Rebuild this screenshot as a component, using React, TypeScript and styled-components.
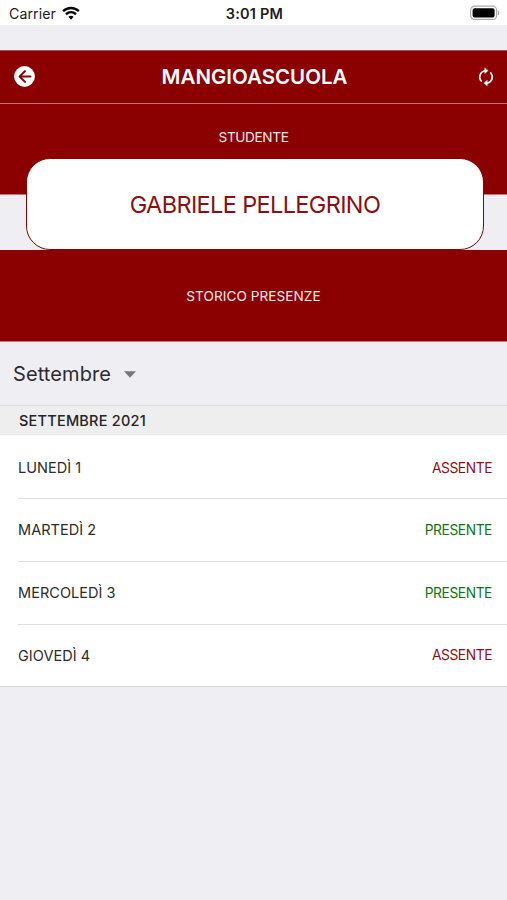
import React from "react";
import styled, { createGlobalStyle } from "styled-components";

const GlobalStyle = createGlobalStyle`
  * { box-sizing: border-box; }
  body { margin: 0; background: #efeef3; font-family: Inter, "Liberation Sans", sans-serif; }
`;

const Screen = styled.main`
  width: 507px;
  min-height: 900px;
  background: #efeef3;
  display: flex;
  flex-direction: column;
`;

const StatusBar = styled.div`
  height: 25px;
  padding: 1px 7px 0 9px;
  background: #fff;
  color: #1c1c1e;
  display: grid;
  grid-template-columns: 1fr auto 1fr;
  align-items: center;
`;

const Carrier = styled.div`
  display: flex;
  align-items: center;
  gap: 6px;
  font-size: 14.2px;
  letter-spacing: 0.05px;
`;

const Clock = styled.div`
  font-size: 14.5px;
  font-weight: 600;
  letter-spacing: 0.2px;
`;

const BatteryIcon = styled.svg`
  justify-self: end;
`;

const Header = styled.header`
  height: 54px;
  margin-top: 25px;
  padding: 0 12px 1px 14px;
  background: #8b0000;
  border-top: 1px solid #a94f51;
  border-bottom: 1px solid #bd7577;
  display: grid;
  grid-template-columns: 1fr auto 1fr;
  align-items: center;
`;

const Title = styled.h1`
  margin: 0;
  color: #fff;
  font-size: 20.5px;
  font-weight: 600;
  letter-spacing: 0;
`;

const IconButton = styled.button<{ $end?: boolean }>`
  justify-self: ${({ $end }) => ($end ? "end" : "start")};
  padding: 0;
  border: 0;
  background: none;
  display: flex;
`;

const Banner = styled.section<{ $height: number; $top: number }>`
  height: ${({ $height }) => $height}px;
  padding-top: ${({ $top }) => $top}px;
  background: #8b0000;
  border-bottom: 1px solid #c5797d;
  display: flex;
  justify-content: center;
`;

const BannerLabel = styled.span<{ $spacing: number }>`
  color: #f9e9e8;
  font-size: 13.6px;
  line-height: 18px;
  letter-spacing: ${({ $spacing }) => $spacing}px;
`;

const StudentCard = styled.div`
  position: relative;
  width: 458px;
  height: 92px;
  margin: -37px 0 0 26px;
  border: 1px solid #8b0000;
  border-radius: 24px;
  background: #fff;
  color: #8b0f12;
  display: flex;
  align-items: center;
  justify-content: center;
  font-size: 23.5px;
  letter-spacing: -0.64px;
`;

const MonthPicker = styled.div`
  height: 63px;
  padding: 1px 0 0 13px;
  color: #2c2c30;
  display: flex;
  align-items: center;
  gap: 13px;
  font-size: 20px;
  letter-spacing: 0.1px;
`;

const SectionTitle = styled.h2`
  height: 30px;
  margin: 0;
  padding: 0 19px;
  background: #eee;
  border-top: 1px solid #dedee2;
  color: #252525;
  display: flex;
  align-items: center;
  font-size: 14.5px;
  font-weight: 500;
  letter-spacing: 0.22px;
`;

const DayList = styled.ul`
  margin: 0;
  padding: 0 0 0 18px;
  list-style: none;
  background: #fff;
  border-bottom: 1px solid #d9d9dc;
`;

const DayRow = styled.li`
  height: 62.75px;
  padding-right: 15px;
  display: flex;
  align-items: center;
  justify-content: space-between;
  color: #2c2c2c;
  font-size: 14.5px;
  letter-spacing: 0.04px;

  &:not(:last-child) { border-bottom: 1px solid #dedede; }
  &:first-child { height: 64px; padding-top: 2px; }
  &:last-child { height: 61px; }
`;

const Presence = styled.span<{ $present: boolean }>`
  color: ${({ $present }) => ($present ? "#0b760f" : "#930c12")};
  font-size: 13.8px;
  letter-spacing: -0.43px;
`;

const days = [
  { label: "LUNEDÌ 1", present: false },
  { label: "MARTEDÌ 2", present: true },
  { label: "MERCOLEDÌ 3", present: true },
  { label: "GIOVEDÌ 4", present: false },
];

export default function App() {
  return (
    <>
      <GlobalStyle />
      <Screen>
        <StatusBar>
          <Carrier>
            Carrier
            <svg width="18" height="14" viewBox="0 0 18 14" fill="none" stroke="#080808" strokeWidth="2.5">
              <path d="M1.1 5.1C5.6.8 12.4.8 16.9 5.1" />
              <path d="M4 8.2c2.9-2.6 7.1-2.6 10 0" />
              <path d="M6.4 10.7 9 13.7l2.6-3c-1.4-1.3-3.8-1.3-5.2 0Z" fill="#080808" stroke="none" />
            </svg>
          </Carrier>
          <Clock>3:01 PM</Clock>
          <BatteryIcon width="31" height="16" viewBox="0 0 31 16">
            <rect x="1.6" y="1.2" width="26" height="13.2" rx="4" fill="#fff" stroke="#aaa" strokeWidth="1.2" />
            <rect x="3.6" y="3.2" width="22" height="9.2" rx="2" fill="#000" />
            <path d="M28.9 5.7c2 .6 2 3.9 0 4.5Z" fill="#aaa" />
          </BatteryIcon>
        </StatusBar>
        <Header>
          <IconButton aria-label="Indietro">
            <svg width="21" height="21" viewBox="0 0 21 21">
              <circle cx="10.5" cy="10.5" r="10.4" fill="#fff" />
              <path d="M11 5.1 5.6 10.5 11 15.9M5.8 10.5h10.7" fill="none" stroke="#8b0000" strokeWidth="2" strokeLinecap="round" strokeLinejoin="round" />
            </svg>
          </IconButton>
          <Title>MANGIOASCUOLA</Title>
          <IconButton $end aria-label="Aggiorna">
            <svg width="18" height="20" viewBox="0 0 18 20" fill="none" stroke="#fff" strokeWidth="1.6" strokeLinecap="round">
              <path d="M8.1 3.8A6.3 6.3 0 0 0 4.2 14.1" />
              <path d="M9.9 16.2A6.3 6.3 0 0 0 13.8 5.9" />
              <path d="M7.8 1.2v5.2l3.1-2.6ZM10.2 13.6v5.2l-3.1-2.6Z" fill="#fff" strokeWidth=".5" strokeLinejoin="round" />
            </svg>
          </IconButton>
        </Header>
        <Banner $height={91} $top={24}>
          <BannerLabel $spacing={-0.36}>STUDENTE</BannerLabel>
        </Banner>
        <StudentCard>GABRIELE PELLEGRINO</StudentCard>
        <Banner $height={92} $top={37}>
          <BannerLabel $spacing={0.05}>STORICO PRESENZE</BannerLabel>
        </Banner>
        <MonthPicker>
          Settembre
          <svg width="12" height="7" viewBox="0 0 12 7">
            <path d="M0 .3h12L6 6.7Z" fill="#77777b" />
          </svg>
        </MonthPicker>
        <SectionTitle>SETTEMBRE 2021</SectionTitle>
        <DayList>
          {days.map((day) => (
            <DayRow key={day.label}>
              <span>{day.label}</span>
              <Presence $present={day.present}>{day.present ? "PRESENTE" : "ASSENTE"}</Presence>
            </DayRow>
          ))}
        </DayList>
      </Screen>
    </>
  );
}
